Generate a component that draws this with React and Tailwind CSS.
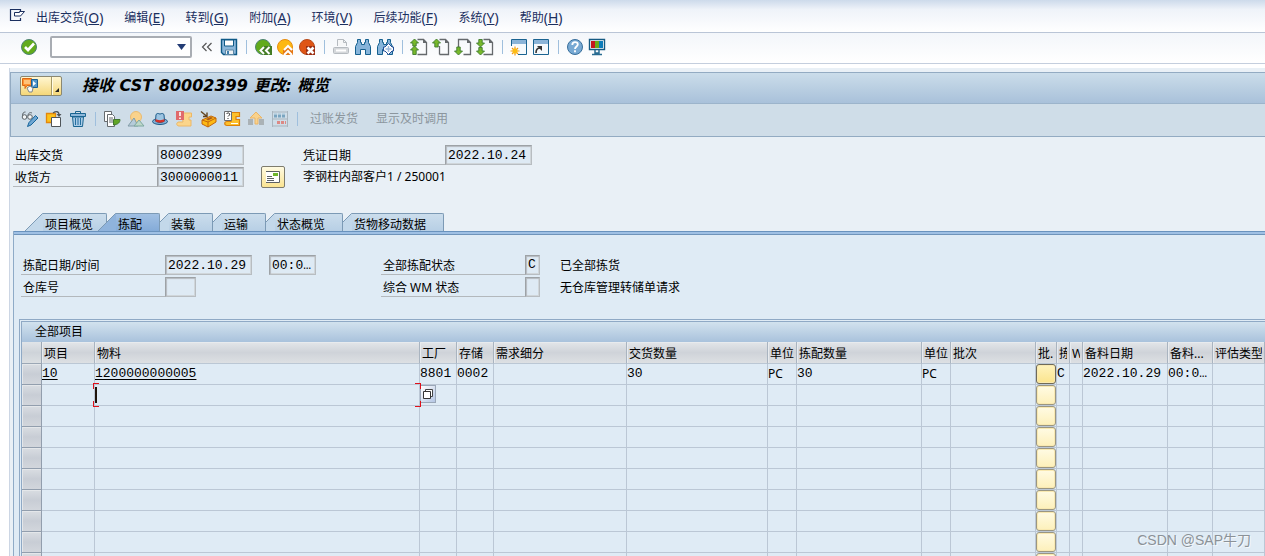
import React from 'react';
import clsx from 'clsx';

const menus = [
  ['出库交货', 'O'],
  ['编辑', 'E'],
  ['转到', 'G'],
  ['附加', 'A'],
  ['环境', 'V'],
  ['后续功能', 'F'],
  ['系统', 'Y'],
  ['帮助', 'H'],
];

const PAGE = 'M7.5 1.5h6l3 3v12h-9';

function Svg({ children, size = 18 }) {
  return (
    <svg width={size} height={size} viewBox={`0 0 ${size} ${size}`} fill="none" aria-hidden="true">
      {children}
    </svg>
  );
}

function Binoculars() {
  return (
    <path d="M3.500 1.500h3v3h1v2h3v-2h1v-3h3v3l2 4v8h-5v-5h-5v5h-5v-8l2-4z" fill="#86b4da" stroke="#15608f" />
  );
}

function Page({ open }) {
  return (
    <>
      <path d={open ? 'M4.500 9V1.500h9l3 3v12h-7' : PAGE} stroke="#65696c" strokeWidth="1.300" />
      <path d="M13 1v4h4z" fill="#65696c" />
    </>
  );
}

function Arrow({ d }) {
  return <path d={d} fill="#78b82a" stroke="#3d7a2c" strokeWidth=".9" />;
}

const icons = {
  check: (
    <Svg>
      <circle cx="9" cy="9" r="7.500" fill="#62ab1c" stroke="#4d8371" />
      <path d="m5 9 3 3 6-6.500" stroke="#fff" strokeWidth="2.600" />
    </Svg>
  ),
  save: (
    <Svg>
      <path d="M1.500 1.500h15v15h-13l-2-2z" fill="#8bb7da" stroke="#0f5a87" strokeWidth="1.400" />
      <path d="M4.500 2h9v6h-9z" fill="#fff" stroke="#0f5a87" />
      <path d="M5.500 12h8v4.500h-8z" fill="#eef2f5" stroke="#5c87a5" />
      <path d="M7 13h2v3H7z" fill="#3f7fae" />
    </Svg>
  ),
  back: (
    <Svg>
      <circle cx="9" cy="9" r="7.500" fill="#62ab1c" stroke="#4d8371" />
      <path d="M9 8h9v9H9l-4-4z" fill="#447c25" />
      <path d="m10 9-3.500 3.500L10 16m5.500-7L12 12.500l3.500 3.500" stroke="#fff" strokeWidth="2" />
    </Svg>
  ),
  exit: (
    <Svg>
      <circle cx="9" cy="9" r="7.500" fill="#fdb813" stroke="#e78b0d" />
      <path d="m7 12 5-5 5 5v5H7z" fill="#e57816" />
      <path d="m8 12 4-4 4 4m-8 5 4-4 4 4" stroke="#fff" strokeWidth="2" />
    </Svg>
  ),
  cancel: (
    <Svg>
      <circle cx="9" cy="9" r="7.500" fill="#df5515" stroke="#b74a19" />
      <path d="M8 8h9v9H8z" fill="#9b2e12" />
      <path d="m9.500 9.500 6 6m0-6-6 6" stroke="#fff" strokeWidth="2.600" />
    </Svg>
  ),
  print: (
    <Svg>
      <path d="M5.500 8V1.500h6l3 3V8" fill="#f6f7f8" stroke="#b6bbc0" />
      <path d="M11.500 1.500v3h3" stroke="#b6bbc0" />
      <rect x="1.500" y="9.500" width="15" height="6" rx="1" fill="#d5d8db" stroke="#b6bbc0" />
      <path d="M4 12.500h10" stroke="#fff" strokeWidth="2" />
    </Svg>
  ),
  find: <Svg><Binoculars /></Svg>,
  findNext: (
    <Svg>
      <Binoculars />
      <path d="M12.500 5.500 16 9h1.500v4H16l-3.500 3.500L9 13H7.500V9H9z" fill="#fff" stroke="#234e97" />
      <path d="M12.500 8v6m-3-3h6" stroke="#9db9dc" strokeWidth="1.500" />
    </Svg>
  ),
  firstPage: (
    <Svg>
      <Page />
      <Arrow d="M4.500 1 8.500 5H6.200v3h-3.400V5H.5z" />
      <Arrow d="m4.500 8 4 4H6.200v4.500H2.800V12H.5z" />
    </Svg>
  ),
  prevPage: (
    <Svg>
      <Page />
      <path d="M7.500 8v8.500" stroke="#65696c" strokeWidth="1.300" />
      <Arrow d="M4.500 1 8.500 5H6.200v4h-3.400V5H.5z" />
    </Svg>
  ),
  nextPage: (
    <Svg>
      <Page open />
      <Arrow d="m4.500 17-4-4h2.300V9h3.400v4h2.300z" />
    </Svg>
  ),
  lastPage: (
    <Svg>
      <Page />
      <Arrow d="m4.500 9-4-4h2.300V1.500h3.400V5h2.300z" />
      <Arrow d="m4.500 17-4-4h2.300V9.500h3.400V13h2.300z" />
    </Svg>
  ),
  newSession: (
    <Svg>
      <path d="M1.500 1.500h15v15h-15z" fill="#f5f9fc" stroke="#1a6391" />
      <path d="M2 2h14v4H2z" fill="#8bb4d8" />
      <path d="M0 8h8v10H0z" fill="#fff" />
      <path d="M5 8.500v9M.5 13h9M2 10l6 6m0-6-6 6" stroke="#f39a12" strokeWidth="1.200" />
      <circle cx="5" cy="13" r="2.500" fill="#fdbd12" />
    </Svg>
  ),
  shortcut: (
    <Svg>
      <path d="M1.500 1.500h15v15h-15z" fill="#f5f9fc" stroke="#1a6391" />
      <path d="M2 2h14v4H2z" fill="#8bb4d8" />
      <path d="M4 15c0-4 2-5 4-5" stroke="#333" strokeWidth="1.600" />
      <path d="M5 8h5v5z" fill="#333" />
    </Svg>
  ),
  help: (
    <Svg>
      <circle cx="9" cy="9" r="7.500" fill="#78a9d3" stroke="#386f9c" />
      <path d="M6.300 7c0-4 5.500-3.500 5.500-.5C11.800 8.500 9 8.500 9 11m0 1.300v2" stroke="#fff" strokeWidth="1.800" />
    </Svg>
  ),
  monitor: (
    <Svg>
      <path d="M1.500 1.500h15v10h-15z" fill="#fff" stroke="#155a82" strokeWidth="1.400" />
      <path d="M3 3h4v7H3z" fill="#c6151d" />
      <path d="M7 3h4v7H7z" fill="#6aaa1a" />
      <path d="M11 3h4v7h-4z" fill="#0c7cba" />
      <path d="M7 12v3h4v-3M4 16.500h10" stroke="#286b91" strokeWidth="1.500" />
    </Svg>
  ),
  glasses: (
    <Svg>
      <path d="M1.500 6c0-3 1-4 3-4M7 6c0-3 2-4 4-3" stroke="#5b6266" />
      <circle cx="3.500" cy="7" r="2.300" fill="#f3f6f8" stroke="#5b6266" />
      <circle cx="9" cy="7" r="2.300" fill="#f3f6f8" stroke="#5b6266" />
      <path d="m6.500 16.500 1.500-4L14.500 5.500l2.500 2.500-7 7z" fill="#6ea6d2" stroke="#17659b" />
    </Svg>
  ),
  otherDoc: (
    <Svg>
      <path d="M1.500 3.500h9v9h-9z" fill="#fcc21b" stroke="#e4870c" strokeWidth="1.300" />
      <path d="M6.500 7.500h9v9h-9z" fill="#fff" stroke="#4f5559" />
      <path d="M8 3c3-2 6-2 6 2" stroke="#4f5559" strokeWidth="1.300" />
      <path d="M11.500 4h5L14 7z" fill="#4f5559" />
    </Svg>
  ),
  trash: (
    <Svg>
      <path d="M6.500 3.500v-2h5v2" stroke="#1a6591" />
      <path d="M3.500 7h11l-1 9.500h-9z" fill="#a9cbe6" stroke="#1a6591" />
      <path d="M1.500 3.500h15v3h-15z" fill="#8cb7da" stroke="#1a6591" />
      <path d="M6.500 8v7m2.500-7v7m2.500-7v7" stroke="#256f9f" />
    </Svg>
  ),
  docFlow: (
    <Svg>
      <path d="M1.500 1.500h7v10h-7z" fill="#fff" stroke="#666b6e" />
      <path d="M4.500 4.500h5l2 2v10h-7z" fill="#fff" stroke="#666b6e" />
      <path d="M6 8h4m-4 2h4m-4 2h4" stroke="#666b6e" />
      <path d="M10.500 9.500H17c0 3-2 5-6.500 5.500z" fill="#62a626" stroke="#40772e" />
    </Svg>
  ),
  mountains: (
    <Svg>
      <circle cx="9" cy="7" r="5.500" fill="#f9d28c" stroke="#eabb70" />
      <path d="m1 16 6-8 4 8z" fill="#b5cbd9" stroke="#829ca8" />
      <path d="m7 16 5-6 5 6z" fill="#bdd8c9" stroke="#7da8a0" />
    </Svg>
  ),
  hat: (
    <Svg>
      <ellipse cx="9" cy="11.500" rx="7.500" ry="3" fill="#80add2" stroke="#1d5b89" />
      <path d="M4.500 11 5 4.500c2-2 2.500-.5 4-.5s2-1.500 4 .5l.5 6.500c-2 2-7 2-9 0z" fill="#9cc4e2" stroke="#1d5b89" />
      <path d="M4.500 9c2 1.500 7 1.500 9 0v2.500c-2 1.500-7 1.500-9 0z" fill="#d33028" />
    </Svg>
  ),
  scrollAlert: (
    <Svg>
      <path d="M7 3h9.500v4H14v3h2v6H4c-3 0-3-4 0-4h4z" fill="#fbd58b" stroke="#edb866" />
      <path d="M1 1h8v9H1z" fill="#e06a6c" />
      <path d="M5 2v4m0 1.500V9" stroke="#fff" strokeWidth="1.600" />
    </Svg>
  ),
  box: (
    <Svg>
      <path d="m3 10 9-4 5 2v4l-8 5-6-3z" fill="#fdb913" stroke="#c3660c" />
      <path d="m3 10 6 2 8-4m-8 4v5" stroke="#c3660c" />
      <path d="m7 9 5-2 2 1-5 2.500z" fill="#a8581a" />
      <path d="m2 1.500 6 5M8 2.500v4H4" stroke="#63441f" strokeWidth="1.400" />
    </Svg>
  ),
  scrollQuestion: (
    <Svg>
      <path d="M8 2.500h8.500v4H13v3h3.500v6H4c-3 0-3-4 0-4h4z" fill="#fdc12b" stroke="#dc800b" strokeWidth="1.200" />
      <path d="M8 13.500h7" stroke="#fff" />
      <path d="M1.500 1.500h7v9h-7z" fill="#fff" stroke="#6a6d70" />
      <path d="M3.500 4c1-2 4-1 3 1L5 6.500M5 8v1" stroke="#333" />
    </Svg>
  ),
  hierarchy: (
    <Svg>
      <path d="m3 8 6-6 6 6h-4v6H8V8z" fill="#f9d28c" stroke="#ebb566" />
      <path d="M1 9h5v6H1zm11 0h5v6h-5z" fill="#aab2b6" />
    </Svg>
  ),
  abacus: (
    <Svg>
      <path d="M1.500 1v16m15-16v16M1 2h16M1 9h16M1 16h16" stroke="#a9b5be" />
      <path d="M3 6h12" stroke="#7ba5c0" strokeWidth="3" strokeDasharray="3 1" />
      <path d="M6 12.500h9" stroke="#dc8985" strokeWidth="3" strokeDasharray="3 1" />
      <path d="M3 4h12" stroke="#a9c7da" strokeDasharray="3 1" />
    </Svg>
  ),
};

const mainTools = [
  [['save', '保存']],
  [['back', '返回'], ['exit', '退出'], ['cancel', '取消']],
  [['print', '打印'], ['find', '查找'], ['findNext', '继续查找']],
  [['firstPage', '第一页'], ['prevPage', '上一页'], ['nextPage', '下一页'], ['lastPage', '最后一页']],
  [['newSession', '新建会话'], ['shortcut', '创建快捷方式']],
  [['help', '帮助'], ['monitor', '定制本地布局']],
];

const appTools = [
  [['glasses', '显示/更改'], ['otherDoc', '其他凭证'], ['trash', '删除']],
  [
    ['docFlow', '凭证流'],
    ['mountains', '概览'],
    ['hat', '抬头'],
    ['scrollAlert', '不完整日志'],
    ['box', '包装'],
    ['scrollQuestion', '日志'],
    ['hierarchy', '层次'],
    ['abacus', '批次拆分'],
  ],
];

const tabs = ['项目概览', '拣配', '装载', '运输', '状态概览', '货物移动数据'];

const columns = [
  { key: 'item', title: '项目', width: 'w-[53px]' },
  { key: 'material', title: '物料', width: 'w-[325px]' },
  { key: 'plant', title: '工厂', width: 'w-[37px]' },
  { key: 'storage', title: '存储', width: 'w-[37px]' },
  { key: 'req', title: '需求细分', width: 'w-[133px]' },
  { key: 'qty', title: '交货数量', width: 'w-[141px]' },
  { key: 'unit', title: '单位', width: 'w-[29px]' },
  { key: 'pickQty', title: '拣配数量', width: 'w-[125px]' },
  { key: 'pickUnit', title: '单位', width: 'w-[29px]' },
  { key: 'batch', title: '批次', width: 'w-[85px]' },
  { key: 'split', title: '批.', width: 'w-[21px]' },
  { key: 'status', title: '拣', width: 'w-[13px]' },
  { key: 'wm', title: 'W', width: 'w-[13px]' },
  { key: 'date', title: '备料日期', width: 'w-[85px]' },
  { key: 'time', title: '备料...', width: 'w-[45px]' },
  { key: 'valuation', title: '评估类型', width: 'w-auto' },
];

const firstRow = {
  item: '10',
  material: '1200000000005',
  plant: '8801',
  storage: '0002',
  qty: '30',
  unit: 'PC',
  pickQty: '30',
  pickUnit: 'PC',
  status: 'C',
  date: '2022.10.29',
  time: '00:0…',
};

const rows = [firstRow, {}, {}, {}, {}, {}, {}, {}, {}, {}];

const mono = 'font-["Liberation_Mono","Noto_Sans_CJK_SC",monospace] text-[13px]';

function ToolGroups({ groups, buttonClass, sepClass }) {
  return groups.map((group, i) => (
    <React.Fragment key={i}>
      {i > 0 && <Separator className={sepClass} />}
      {group.map(([name, label]) => (
        <button key={name} title={label} aria-label={label} className={clsx('flex justify-center shrink-0', buttonClass)}>
          {icons[name]}
        </button>
      ))}
    </React.Fragment>
  ));
}

function Separator({ className }) {
  return (
    <div className={clsx('flex justify-center shrink-0', className)}>
      <div className="w-px h-3.5 bg-[#9fbfdd]" />
    </div>
  );
}

function Field({ id, label, value, width }) {
  return (
    <div className="flex h-5">
      <label htmlFor={id} className="w-36 pl-[2px] border-b border-[#b3b8bc] leading-[22px] whitespace-nowrap">
        {label}
      </label>
      <Box id={id} value={value} width={width} />
    </div>
  );
}

function Box({ width, ...props }) {
  return (
    <input
      readOnly
      className={clsx(
        'h-5 pl-[2px] border border-[#9da2a6] border-r-[#b8bdc1] border-b-[#b8bdc1] bg-[#deeaf4] shadow-[inset_1px_1px_1px_#b5babf,inset_-1px_-1px_0_#d0d6da] outline-none',
        mono,
        width
      )}
      {...props}
    />
  );
}

function Tab({ label, index, active }) {
  return (
    <button
      role="tab"
      aria-selected={active}
      className={clsx('relative flex h-[18px]', index > 0 && '-ml-[9px]')}
      style={{ zIndex: active ? 20 : 10 - index }}
    >
      <svg width="18" height="18" viewBox="0 0 18 18" aria-hidden="true">
        <path d="M0 18 18 0v18z" fill={active ? '#8fb3dc' : '#c3d8ea'} />
        <path d="M0 18 17.500.5H18" fill="none" stroke="#7c9ab5" />
      </svg>
      <span
        className={clsx(
          'h-[18px] pl-[2px] border-t border-r border-[#7c9ab5] rounded-tr-[2px] leading-[22px] whitespace-nowrap',
          index === 0 ? 'pr-[13px]' : 'pr-[17px]',
          active ? 'bg-linear-to-b from-[#a1c0e3] to-[#84abd8]' : 'bg-linear-to-b from-[#cbddec] to-[#b7cfe5]'
        )}
      >
        {label}
      </span>
    </button>
  );
}

function Cell({ column, row, rowIndex }) {
  const value = row[column.key];
  if (column.key === 'split') {
    return (
      <button
        aria-label="批次拆分"
        className={clsx(
          'block w-5 h-5 border rounded-[3px] shadow-[inset_0_0_0_1px_#f9e9b0]',
          rowIndex === 0
            ? 'border-[#6f6a58] bg-linear-to-b from-[#fff3bd] to-[#fbe48c]'
            : 'border-[#9a9682] bg-linear-to-b from-[#fffbe4] to-[#fdf0ba]'
        )}
      />
    );
  }
  if (rowIndex === 1 && column.key === 'material') return <ActiveCell />;
  if (rowIndex === 1 && column.key === 'plant') {
    return (
      <button aria-label="搜索帮助" className="flex items-center justify-center w-4 h-[18px] border border-[#9aa7b8] bg-linear-to-br from-white to-[#b4c6e4]">
        <Svg size={12}>
          <path d="M3.500 1.500h7v7h-7z" fill="#fff" stroke="#444" />
          <path d="M1.500 3.500h7v7h-7z" fill="#fff" stroke="#333" />
        </Svg>
      </button>
    );
  }
  if (value && (column.key === 'item' || column.key === 'material')) {
    return <a href="#" className="underline underline-offset-2">{value}</a>;
  }
  return value;
}

function ActiveCell() {
  const corner = 'absolute w-1.5 h-1.5 border-[#e0101a]';
  return (
    <div className="relative h-5">
      <input aria-label="物料" className="w-full h-full bg-transparent outline-none" />
      <span className="absolute left-0 top-[2px] w-[2px] h-4 bg-[#20150c]" />
      <span className={clsx(corner, '-left-[2px] -top-[2px] border-t border-l')} />
      <span className={clsx(corner, '-right-[2px] -top-[2px] border-t border-r')} />
      <span className={clsx(corner, '-left-[2px] -bottom-[2px] border-b border-l')} />
      <span className={clsx(corner, '-right-[2px] -bottom-[2px] border-b border-r')} />
    </div>
  );
}

function ItemTable() {
  return (
    <table className="w-full table-fixed border-separate border-spacing-0">
      <colgroup>
        <col className="w-5" />
        {columns.map((c) => <col key={c.key} className={c.width} />)}
      </colgroup>
      <thead>
        <tr className="h-[22px]">
          <td className="p-0 border-r border-b border-[#9ba7b5] bg-linear-to-b from-[#e0e4e8] via-[#ced3d9] to-[#dbdfe2]" />
          {columns.map((c) => (
            <th
              key={c.key}
              className="p-0 font-normal text-left border-r border-b border-r-[#a9b4c0] border-b-[#bbc7d4] bg-linear-to-b from-[#e3e6e9] via-[#cfd3d9] to-[#dde0e3] shadow-[inset_1px_1px_0_#e8ebee]"
            >
              <div className="h-5 mx-[2px] leading-[22px] overflow-hidden whitespace-nowrap">{c.title}</div>
            </th>
          ))}
        </tr>
      </thead>
      <tbody>
        {rows.map((row, i) => (
          <tr key={i} className="h-[21px]">
            <td className="p-0 border-r border-b border-[#929ead] bg-linear-to-b from-[#d9dde2] via-[#c8cdd5] to-[#d2d6dc] shadow-[inset_1px_1px_0_#e4e7ea]" />
            {columns.map((c) => (
              <td
                key={c.key}
                className={clsx(
                  'p-0 h-[21px] leading-5 whitespace-nowrap align-top border-r border-b border-[#bbc7d5]',
                  c.key === 'unit' || c.key === 'pickUnit' ? 'text-xs' : mono
                )}
              >
                <Cell column={c} row={row} rowIndex={i} />
              </td>
            ))}
          </tr>
        ))}
      </tbody>
    </table>
  );
}

export default function App() {
  return (
    <div className='relative flex flex-col h-screen overflow-hidden bg-white text-xs text-black font-["Noto_Sans","Noto_Sans_CJK_SC",sans-serif]'>
      <nav className="flex shrink-0 items-center h-[33px] pl-2 pt-[3px] border-b border-[#bac5d6] bg-linear-to-b from-[#cddaeb] via-[#eff3f9] via-30% to-white text-[#1b2f5f]">
        <button aria-label="系统菜单" className="mr-2.5 mb-1">
          <Svg>
            <path d="M12.500 4.500v-2h-10v11h10V11" stroke="#1b2f5f" strokeWidth="1.200" />
            <path d="M6.500 9V5.500h5v-1h5L12.500 9z" fill="#fff" stroke="#1b2f5f" />
          </Svg>
        </button>
        <ul className="flex gap-[21px] leading-5">
          {menus.map(([label, key]) => (
            <li key={key}>
              <button className="flex items-center whitespace-nowrap">
                {label}
                <span className="text-sm leading-5">(<u>{key}</u>)</span>
              </button>
            </li>
          ))}
        </ul>
      </nav>

      <div className="flex shrink-0 items-center h-[31px] pl-5 pb-[2px] border-b border-[#c4cedd] bg-linear-to-b from-[#f3f6fa] to-white">
        <button aria-label="回车">{icons.check}</button>
        <div className="relative ml-3">
          <input aria-label="命令" className="block w-[142px] h-[22px] pl-1 border-2 border-[#a9adb3] rounded-[2px] bg-white outline-none" />
          <svg className="absolute right-1.5 top-2" width="9" height="6" viewBox="0 0 9 6" aria-hidden="true">
            <path d="M0 0h9L4.500 6z" fill="#233c75" />
          </svg>
        </div>
        <button aria-label="隐藏命令栏" className="w-[26px] flex justify-center pl-1">
          <Svg size={12}>
            <path d="m5.500 2-4 4 4 4m5-8-4 4 4 4" stroke="#555" strokeWidth="1.200" />
          </Svg>
        </button>
        <ToolGroups groups={mainTools} buttonClass="w-[22px]" sepClass="w-3" />
      </div>

      <main className="flex flex-col flex-1 min-h-0 mt-1 ml-[9px] border-l border-[#ccd6e4] bg-[#e9f0f6]">
        <header className="shrink-0 mt-1 border-l border-t border-b border-[#93abc2]">
          <div className="flex items-center h-[31px] pl-[9px] pb-1 border-b border-[#9cb4cb] bg-linear-to-b from-[#cbddea] to-[#a9c1da]">
            <button aria-label="对象服务" className="flex w-[42px] h-5 border border-[#8b8871] rounded-[2px] bg-linear-to-b from-[#fff6d0] to-[#f5d778]">
              <svg width="40" height="18" viewBox="0 0 40 18" fill="none" aria-hidden="true">
                <path d="M1.500 1.500h9v7H6l-2 3v-3H1.500z" fill="#ff9330" stroke="#dc6713" />
                <path d="M3 4h6M3 6h6" stroke="#fff1c2" />
                <path d="M10.500 2.500h6v8h-6z" fill="#5297ca" stroke="#1a5f94" />
                <path d="m12 4 3 2.500L12 9z" fill="#fff" />
                <path d="m6 11 3-2 3 2-1 4H8z" fill="#f7fafc" stroke="#7d858a" />
                <path d="M30.500 0v18" stroke="#a79a66" />
                <path d="M31.500 0v18" stroke="#fffbe5" />
                <path d="M38 11v4h-4z" fill="#222" />
              </svg>
            </button>
            <h1 className='ml-5 text-base leading-6 font-bold italic whitespace-nowrap font-["DejaVu_Sans","Noto_Sans_CJK_SC",sans-serif]'>
              接收 CST 80002399 更改: 概览
            </h1>
          </div>
          <div className="flex items-center h-8 pl-[7px] pb-[3px] bg-[#cfdde8]">
            <ToolGroups groups={appTools} buttonClass="w-6" sepClass="w-2.5" />
            <Separator className="w-2.5" />
            <button disabled className="ml-2 leading-5 text-[#8c969e] whitespace-nowrap">过账发货</button>
            <button disabled className="ml-[18px] leading-5 text-[#8c969e] whitespace-nowrap">显示及时调用</button>
          </div>
        </header>

        <section className="shrink-0 flex flex-col gap-[2px] pl-[3px] pt-2">
          <div className="flex gap-[57px]">
            <Field id="delivery" label="出库交货" value="80002399" width="w-[87px]" />
            <Field id="docDate" label="凭证日期" value="2022.10.24" width="w-[87px]" />
          </div>
          <div className="flex items-center h-5">
            <Field id="shipTo" label="收货方" value="3000000011" width="w-[87px]" />
            <button aria-label="地址" className="flex items-center justify-center shrink-0 w-6 h-[22px] ml-[17px] border border-[#7e7c6d] rounded-[2px] bg-linear-to-b from-[#fffbe2] to-[#fbe491]">
              <Svg size={16}>
                <path d="M1 2.500h13.500v11H1" fill="#fff" stroke="#5c6063" />
                <path d="M8 4h5v3H8z" fill="#6fb52c" />
                <path d="M2 7.500h5m-5 2h7m-7 2h7" stroke="#5c6063" />
              </Svg>
            </button>
            <span className="ml-[18px] leading-[22px] whitespace-nowrap">李钢柱内部客户1 / 250001</span>
          </div>
        </section>

        <div role="tablist" className="shrink-0 flex mt-[26px] pl-[15px]">
          {tabs.map((label, i) => <Tab key={label} label={label} index={i} active={i === 1} />)}
        </div>

        <section className="flex flex-col flex-1 min-h-0 ml-[3px] border-l border-[#8fabc7] bg-[#dfebf5]">
          <div className="shrink-0 h-1 border-t border-b border-t-[#6a93be] border-b-[#6f94ba] bg-[#9fc0e4]" />

          <div className="shrink-0 grid grid-cols-[360px_1fr] gap-y-[2px] pl-[7px] pt-5">
            <div className="flex gap-[17px]">
              <Field id="pickDate" label="拣配日期/时间" value="2022.10.29" width="w-[87px]" />
              <Box aria-label="拣配时间" value="00:0…" width="w-[47px]" />
            </div>
            <div className="flex gap-5 h-5 leading-[22px] whitespace-nowrap">
              <Field id="pickStatus" label="全部拣配状态" value="C" width="w-[15px]" />
              已全部拣货
            </div>
            <Field id="warehouse" label="仓库号" value="" width="w-[31px]" />
            <div className="flex gap-5 h-5 leading-[22px] whitespace-nowrap">
              <Field id="wmStatus" label="综合 WM 状态" value="" width="w-[15px]" />
              无仓库管理转储单请求
            </div>
          </div>

          <section className="flex-1 min-h-0 mt-[22px] ml-[5px] border-l border-t border-[#8fa9c5] pl-px pt-px overflow-hidden">
            <div className="border-l border-t border-[#8fa9c5]">
              <h2 className="h-5 pl-[13px] leading-5 bg-linear-to-b from-[#d2e2ee] to-[#a9c2dc]">全部项目</h2>
              <ItemTable />
            </div>
          </section>
        </section>
      </main>

      <div className='absolute right-[14px] bottom-1.5 text-sm leading-5 text-[#8b9298] [text-shadow:1px_1px_0_#f4f8fb] font-["Liberation_Sans","Noto_Sans_CJK_SC",sans-serif]'>
        CSDN @SAP牛刀
      </div>
    </div>
  );
}
